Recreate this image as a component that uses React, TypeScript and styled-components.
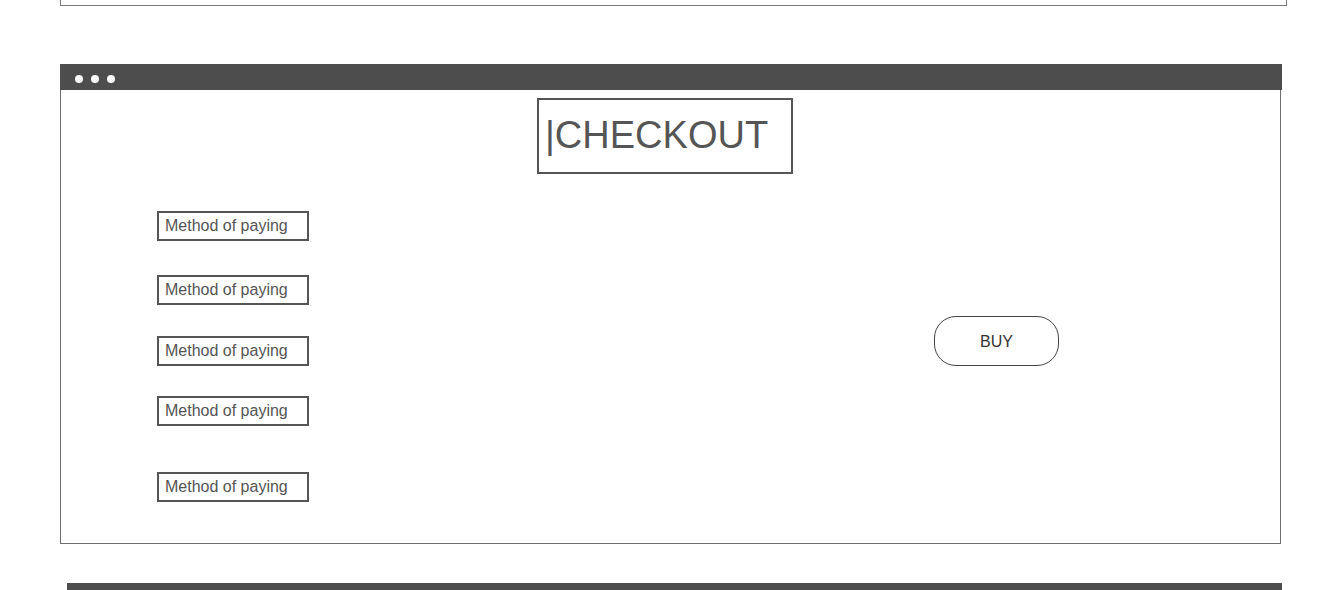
import React from "react";
import styled, { createGlobalStyle } from "styled-components";

const Global = createGlobalStyle`
  html, body { margin: 0; padding: 0; background: #ffffff; }
  body { font-family: "Liberation Sans", Arial, sans-serif; overflow: hidden; }
`;

const Page = styled.div`
  width: 1343px;
  height: 590px;
  overflow: hidden;
  display: flex;
  flex-direction: column;
`;

const TopFrame = styled.div`
  margin-left: 60px;
  width: 1227px;
  height: 7px;
  box-sizing: border-box;
  border: 1px solid #7a7a7a;
  border-top: none;
`;

const Window = styled.section`
  margin-top: 58px;
  margin-left: 60px;
  display: flex;
  flex-direction: column;
`;

const TitleBar = styled.div`
  width: 1222px;
  height: 26px;
  background: #4d4d4d;
  display: flex;
  align-items: flex-start;
  gap: 8px;
  padding: 11px 0 0 15px;
  box-sizing: border-box;
`;

const Dot = styled.span`
  width: 8px;
  height: 8px;
  border-radius: 50%;
  background: #ffffff;
`;

const WindowBody = styled.div`
  width: 1221px;
  height: 454px;
  box-sizing: border-box;
  border: 1px solid #6e6e6e;
  border-top: none;
  display: flex;
  flex-direction: column;
`;

const TitleBox = styled.div`
  margin: 8px 0 0 476px;
  width: 256px;
  height: 76px;
  box-sizing: border-box;
  border: 2px solid #555555;
  display: flex;
  align-items: center;
  padding: 0 6px;
  font-size: 38px;
  color: #555555;
  white-space: nowrap;
`;

const Content = styled.div`
  display: flex;
  align-items: flex-start;
  margin-top: 37px;
  padding-left: 96px;
`;

const MethodList = styled.div`
  display: flex;
  flex-direction: column;
  width: 152px;
`;

const MethodBox = styled.div<{ $gap: number }>`
  margin-top: ${(p) => p.$gap}px;
  width: 152px;
  height: 30px;
  box-sizing: border-box;
  border: 2px solid #555555;
  display: flex;
  align-items: center;
  padding: 1px 0 0 6px;
  font-size: 16px;
  color: #555555;
  white-space: nowrap;
`;

const BuyButton = styled.button`
  margin: 105px 0 0 625px;
  width: 125px;
  height: 50px;
  box-sizing: border-box;
  border: 1px solid #444444;
  border-radius: 22px;
  background: #ffffff;
  font-family: "Liberation Sans", Arial, sans-serif;
  font-size: 16px;
  color: #333333;
  padding: 2px 0 0;
`;

const BottomBar = styled.div`
  margin: 39px 0 0 67px;
  width: 1215px;
  height: 10px;
  background: #4d4d4d;
`;

const gaps = [0, 34, 31, 30, 46];

export default function App() {
  return (
    <Page>
      <Global />
      <TopFrame />
      <Window>
        <TitleBar>
          <Dot />
          <Dot />
          <Dot />
        </TitleBar>
        <WindowBody>
          <TitleBox>|CHECKOUT</TitleBox>
          <Content>
            <MethodList>
              {gaps.map((g, i) => (
                <MethodBox key={i} $gap={g}>
                  Method of paying
                </MethodBox>
              ))}
            </MethodList>
            <BuyButton>BUY</BuyButton>
          </Content>
        </WindowBody>
      </Window>
      <BottomBar />
    </Page>
  );
}
